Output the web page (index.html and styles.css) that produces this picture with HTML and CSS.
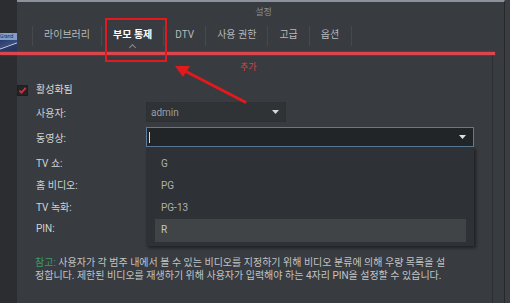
FILE: index.html
```html
<!DOCTYPE html>
<html lang="ko">
<head>
<meta charset="utf-8">
<title>설정</title>
<link rel="stylesheet" href="styles.css">
</head>
<body>
<div class="screen">
  <div class="side">
    <div class="thumb">
      <div class="thumb-top">Grand</div>
      <div class="thumb-bot"></div>
    </div>
  </div>
  <div class="dialog">
    <div class="title">설정</div>
    <nav class="tabs">
      <span class="tab">라이브러리</span>
      <span class="tab active">부모 통제</span>
      <span class="tab">DTV</span>
      <span class="tab">사용 권한</span>
      <span class="tab">고급</span>
      <span class="tab">옵션</span>
    </nav>
    <div class="panel">
      <div class="check-row">
        <span class="checkbox"><svg viewBox="0 0 11 11" width="11" height="11"><path d="M2.4 5.6 L4.5 7.7 L8.7 2.8" fill="none" stroke="#cc3340" stroke-width="1.8"/></svg></span>
        <span class="check-label">활성화됨</span>
      </div>
      <div class="form">
        <div class="row r-user">
          <span class="label">사용자:</span>
          <div class="select user"><span class="value">admin</span><svg class="arrow" viewBox="0 0 7 4" width="7" height="4"><path d="M0 0 H7 L3.5 4 Z" fill="#d8d8d8"/></svg></div>
        </div>
        <div class="row r-video">
          <span class="label">동영상:</span>
          <div class="select focused"><span class="cursor"></span><svg class="arrow" viewBox="0 0 7 4" width="7" height="4"><path d="M0 0 H7 L3.5 4 Z" fill="#e0e0e0"/></svg>
            <ul class="menu">
              <li>G</li>
              <li>PG</li>
              <li>PG-13</li>
              <li class="hover">R</li>
            </ul>
          </div>
        </div>
        <div class="row plain"><span class="label">TV 쇼:</span></div>
        <div class="row plain"><span class="label">홈 비디오:</span></div>
        <div class="row plain"><span class="label">TV 녹화:</span></div>
        <div class="row plain"><span class="label">PIN:</span></div>
      </div>
      <p class="note"><span class="hint">참고:</span> 사용자가 각 범주 내에서 볼 수 있는 비디오를 지정하기 위해 비디오 분류에 의해 우량 목록을 설<br>정합니다. 제한된 비디오를 재생하기 위해 사용자가 입력해야 하는 4자리 PIN을 설정할 수 있습니다.</p>
    </div>
  </div>
  <div class="edge"></div>

  <div class="annot">
    <div class="red-line"></div>
    <div class="red-box"></div>
    <span class="add-note">추가</span>
    <svg class="red-arrow" viewBox="0 0 510 303" width="510" height="303">
      <line x1="245" y1="102" x2="183" y2="70" stroke="#e3191c" stroke-width="3" stroke-linecap="round"/>
      <path d="M175 66 L190 66 L183 77 Z" fill="#e3191c"/>
    </svg>
  </div>
</div>
</body>
</html>
```

FILE: styles.css
```css
* { box-sizing: border-box; }
html, body { margin: 0; padding: 0; }
body {
  width: 510px;
  height: 303px;
  overflow: hidden;
  background: #2d2f32;
  font-family: Roboto, "Noto Sans CJK KR", sans-serif;
}
.screen {
  position: relative;
  display: flex;
  width: 510px;
  height: 303px;
}
.side {
  width: 17px;
  flex: none;
  background: #2b2d30;
  padding-top: 33px;
}
.thumb { width: 17px; }
.thumb-top {
  height: 7px;
  background: #7f9ecb;
  color: #1d2d55;
  font-size: 5px;
  line-height: 7px;
  overflow: hidden;
  white-space: nowrap;
}
.thumb-bot {
  height: 12px;
  background: linear-gradient(160deg, #2a3a66 0%, #3b4f80 45%, #c8d0e0 50%, #2a3a66 55%, #26335a 100%);
}
.dialog {
  width: 488px;
  flex: none;
  background: #383b3f;
  border-top: 2px solid #8b929b;
  border-right: 1px solid #26282b;
  display: flex;
  flex-direction: column;
}
.edge {
  flex: 1;
  background: #3a3d41;
}
.title {
  height: 20px;
  line-height: 20px;
  text-align: center;
  font-size: 9px;
  color: #8b8e92;
  padding-left: 6px;
}
.tabs {
  height: 30px;
  display: flex;
  align-items: flex-start;
  padding-left: 15px;
  padding-top: 4px;
}
.tab {
  position: relative;
  height: 20px;
  line-height: 18px;
  padding: 0 11px;
  font-size: 10px;
  color: #b7b9bc;
  border-left: 1px solid #45484c;
  white-space: nowrap;
}
.tab:last-child { border-right: 1px solid #45484c; padding-right: 12px; }
.tab.active {
  color: #ffffff;
  font-weight: bold;
}
.tab.active::after {
  content: "";
  position: absolute;
  left: 50%;
  bottom: -4px;
  width: 4px;
  height: 4px;
  margin-left: -3px;
  border-left: 1px solid #8a8d91;
  border-top: 1px solid #8a8d91;
  transform: rotate(45deg);
}
.panel {
  flex: 1;
  width: 476px;
  border-right: 1px solid #2c2e31;
  padding-top: 32px;
}
.check-row {
  display: flex;
  align-items: center;
  height: 12px;
  gap: 8px;
}
.checkbox {
  position: relative;
  width: 11px;
  height: 11px;
  flex: none;
  background: #222427;
  border: 1px solid #1c1e20;
}
.checkbox svg { position: absolute; left: -1px; top: -1px; display: block; }
.check-label {
  font-size: 10px;
  color: #dcdcdc;
  line-height: 12px;
}
.form {
  display: flex;
  flex-direction: column;
  padding-left: 19px;
}
.row {
  display: flex;
  align-items: center;
}
.r-user { margin-top: 6px; height: 20px; }
.r-video { margin-top: 5px; height: 20px; margin-bottom: 4px; }
.row.plain { height: 22px; }
.label {
  width: 110px;
  flex: none;
  font-size: 10px;
  color: #d2d3d4;
}
.select {
  position: relative;
  height: 20px;
  display: flex;
  align-items: center;
  justify-content: space-between;
  font-size: 10px;
}
.select.user {
  width: 140px;
  background: #303336;
  border: 1px solid #2e3134;
  padding: 0 6px 0 4px;
  color: #9b9ea1;
}
.select.focused {
  width: 328px;
  background: #222528;
  border: 1px solid #5c7b98;
  padding: 0 7px 0 2px;
}
.cursor {
  width: 1px;
  height: 11px;
  background: #d8d8d8;
}
.arrow { display: block; }
.menu {
  position: absolute;
  left: -1px;
  top: 19px;
  width: 328px;
  margin: 0;
  padding: 6px 8px 4px 9px;
  list-style: none;
  background: #2e3135;
  box-shadow: 2px 2px 3px rgba(0, 0, 0, 0.45);
  z-index: 2;
}
.menu li {
  height: 22px;
  line-height: 22px;
  padding-left: 6px;
  font-size: 10px;
  color: #aeb0b3;
}
.menu li.hover {
  height: 23px;
  background: #404447;
  color: #c4c6c8;
}
.note {
  margin: 18px 0 0 0;
  padding-left: 18px;
  font-size: 10px;
  line-height: 12.5px;
  color: #c2c4c6;
  white-space: nowrap;
}
.hint { color: #3f9a68; }
.annot {
  position: absolute;
  left: 0;
  top: 0;
  width: 510px;
  height: 303px;
  pointer-events: none;
}
.red-line {
  position: absolute;
  left: 0;
  top: 52px;
  width: 495px;
  height: 3px;
  background: #d9464e;
  box-shadow: 0 0 2px rgba(225, 70, 80, 0.7);
}
.red-box {
  position: absolute;
  left: 105px;
  top: 18px;
  width: 62px;
  height: 44px;
  border: 2px solid #e2191e;
}
.add-note {
  position: absolute;
  left: 240px;
  top: 61px;
  font-size: 9px;
  line-height: 12px;
  color: #c84a4a;
}
.red-arrow {
  position: absolute;
  left: 0;
  top: 0;
}
```
